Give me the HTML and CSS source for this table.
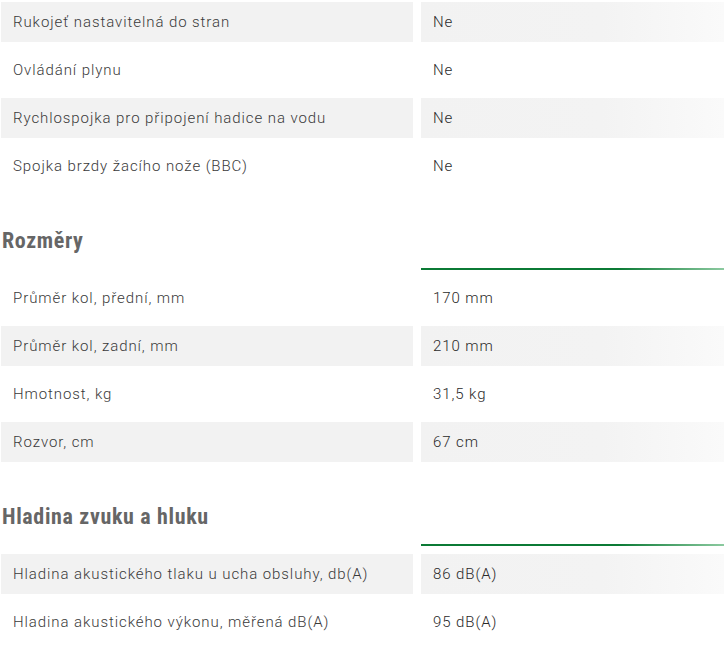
FILE: index.html
```html
<!DOCTYPE html>
<html lang="cs">
<head>
<meta charset="utf-8">
<link rel="stylesheet" href="styles.css">
</head>
<body>
<div class="specs">
  <div class="rows">
    <div class="row shaded"><div class="label">Rukojeť nastavitelná do stran</div><div class="value">Ne</div></div>
    <div class="row"><div class="label">Ovládání plynu</div><div class="value">Ne</div></div>
    <div class="row shaded"><div class="label">Rychlospojka pro připojení hadice na vodu</div><div class="value">Ne</div></div>
    <div class="row"><div class="label">Spojka brzdy žacího nože (BBC)</div><div class="value">Ne</div></div>
  </div>

  <div class="section-head">
    <h2 class="title">Rozměry</h2>
    <div class="rule"></div>
  </div>
  <div class="rows">
    <div class="row"><div class="label">Průměr kol, přední, mm</div><div class="value">170 mm</div></div>
    <div class="row shaded"><div class="label">Průměr kol, zadní, mm</div><div class="value">210 mm</div></div>
    <div class="row"><div class="label">Hmotnost, kg</div><div class="value">31,5 kg</div></div>
    <div class="row shaded"><div class="label">Rozvor, cm</div><div class="value">67 cm</div></div>
  </div>

  <div class="section-head">
    <h2 class="title">Hladina zvuku a hluku</h2>
    <div class="rule"></div>
  </div>
  <div class="rows">
    <div class="row shaded"><div class="label">Hladina akustického tlaku u ucha obsluhy, db(A)</div><div class="value">86 dB(A)</div></div>
    <div class="row"><div class="label">Hladina akustického výkonu, měřená dB(A)</div><div class="value">95 dB(A)</div></div>
  </div>
</div>
</body>
</html>
```

FILE: styles.css
```css
* { box-sizing: border-box; }
html, body { margin: 0; padding: 0; background: #fff; }
body {
  font-family: Roboto, "Noto Sans", Arial, sans-serif;
  font-size: 15px;
  color: #4a4a4a;
}
.specs {
  width: 726px;
  padding: 2px 2px 0 1px;
}
.rows {
  display: flex;
  flex-direction: column;
  gap: 8px;
}
.row {
  display: grid;
  grid-template-columns: 412px 303px;
  column-gap: 8px;
  height: 40px;
}
.label, .value {
  display: flex;
  align-items: center;
  padding-left: 12px;
  font-weight: 300;
  letter-spacing: 0.92px;
}
.label { color: #3a3a3a; }
.value { color: #2a2a2a; }
.row.shaded .label { background: #f2f2f2; }
.row.shaded .value { background: linear-gradient(90deg, #f2f2f2 0%, #f3f3f3 60%, #fafafa 100%); }

.section-head {
  display: grid;
  grid-template-columns: 412px 303px;
  column-gap: 8px;
  padding-top: 41px;
  margin-bottom: 8px;
}
.title {
  margin: 0 0 15px 0;
  font-family: "Roboto Condensed", Roboto, sans-serif;
  font-weight: 700;
  font-size: 22px;
  line-height: 28px;
  letter-spacing: 0.65px;
  color: #666;
  padding-left: 1px;
}
.rule {
  align-self: end;
  height: 2px;
  background: linear-gradient(90deg, #0b7a35 0%, #0b7a35 65%, #8ccaa0 100%);
}
```
